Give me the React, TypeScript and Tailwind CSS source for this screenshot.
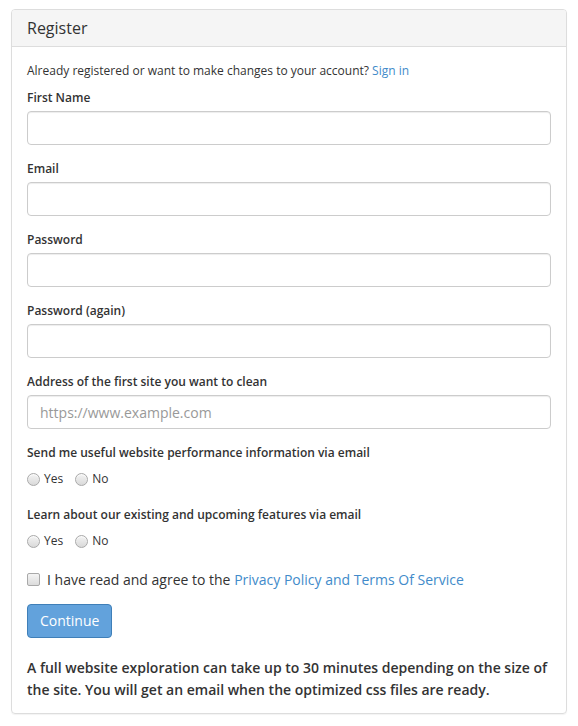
import React from "react";

function Radio() {
  return (
    <span className="inline-block w-[13px] h-[13px] rounded-full border border-[#a9a9a9] bg-gradient-to-b from-[#f4f4f4] to-[#d9d9d9] shadow-[inset_0_1px_1px_rgba(255,255,255,0.8)]" />
  );
}

function Field({ label, placeholder }: { label: string; placeholder?: string }) {
  return (
    <div className="mb-[15px]">
      <div className="text-[12px] leading-[17px] font-semibold text-[#333] mb-[5px]">{label}</div>
      <input
        className="block w-full h-[34px] border border-[#ccc] rounded-[4px] px-[12px] text-[14px] text-[#555] placeholder:text-[#999] shadow-[inset_0_1px_1px_rgba(0,0,0,0.075)] outline-none bg-white"
        placeholder={placeholder}
      />
    </div>
  );
}

function RadioGroup({ label }: { label: string }) {
  return (
    <div>
      <div className="text-[12px] leading-[17px] font-semibold text-[#333] mb-[7px]">{label}</div>
      <div className="flex items-center h-[22px] text-[12px] text-[#333]">
        <span className="flex items-center gap-[4px]">
          <Radio />
          <span>Yes</span>
        </span>
        <span className="flex items-center gap-[4px] ml-[12px]">
          <Radio />
          <span>No</span>
        </span>
      </div>
    </div>
  );
}

export default function App() {
  return (
    <div className="bg-white min-h-[726px] px-[11px] pt-[9px]" style={{ fontFamily: '"Open Sans", "Noto Sans", sans-serif' }}>
      <div className="border border-[#ddd] rounded-[4px] shadow-[0_1px_1px_rgba(0,0,0,0.05)] overflow-hidden">
        <div className="bg-[#f5f5f5] border-b border-[#ddd] h-[37px] px-[15px] flex items-center text-[16px] text-[#333]">
          Register
        </div>
        <div className="px-[15px] pt-[15px] pb-[12px]">
          <p className="text-[12px] leading-[18px] text-[#333] mb-[9px]">
            Already registered or want to make changes to your account?{" "}
            <a className="text-[#428bca]">Sign in</a>
          </p>
          <Field label="First Name" />
          <Field label="Email" />
          <Field label="Password" />
          <Field label="Password (again)" />
          <Field label="Address of the first site you want to clean" placeholder="https://www.example.com" />
          <RadioGroup label="Send me useful website performance information via email" />
          <div className="h-[16px]" />
          <RadioGroup label="Learn about our existing and upcoming features via email" />
          <div className="flex items-center h-[20px] mt-[17px] text-[14px] text-[#333]">
            <span className="inline-block w-[13px] h-[13px] rounded-[2px] border border-[#a9a9a9] bg-gradient-to-b from-[#f4f4f4] to-[#dcdcdc] mr-[7px]" />
            <span>
              I have read and agree to the{" "}
              <a className="text-[#428bca]">Privacy Policy and Terms Of Service</a>
            </span>
          </div>
          <button className="mt-[15px] h-[34px] px-[12px] rounded-[4px] border border-[#3f7fb8] bg-[#62a2dc] text-white text-[14px] leading-[20px]">
            Continue
          </button>
          <p className="mt-[19px] text-[14px] leading-[22px] font-semibold text-[#333]">
            A full website exploration can take up to 30 minutes depending on the size of the site. You will get an email when the optimized css files are ready.
          </p>
        </div>
      </div>
    </div>
  );
}
